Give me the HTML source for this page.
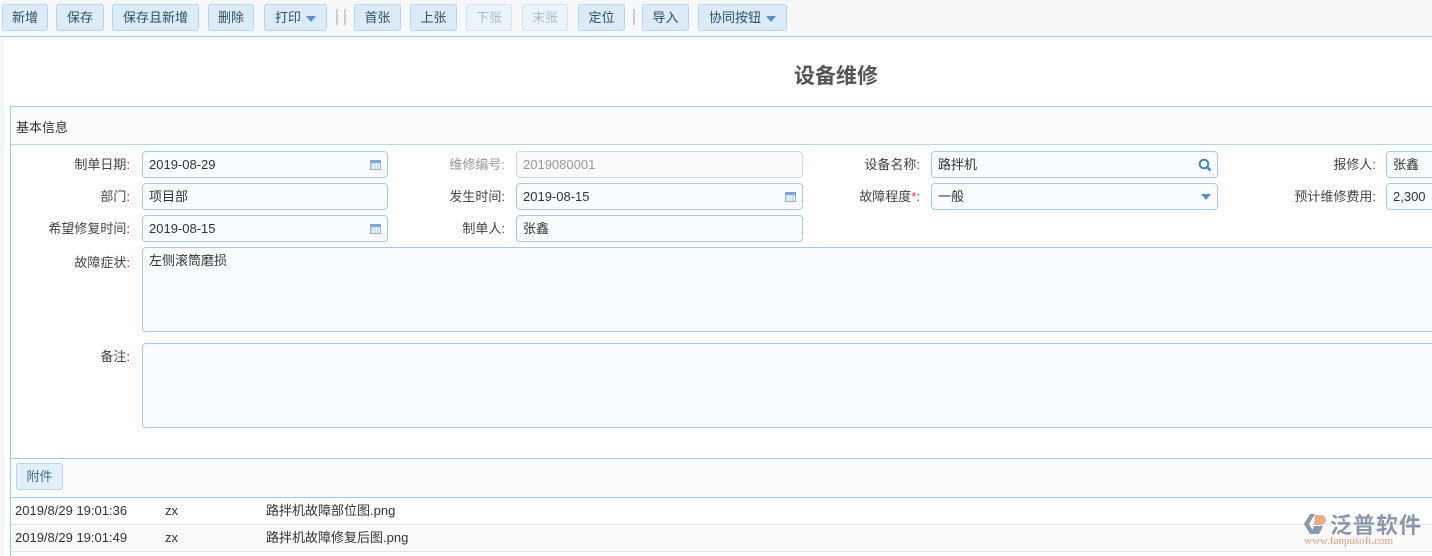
<!DOCTYPE html>
<html><head><meta charset="utf-8"><style>
*{box-sizing:border-box;margin:0;padding:0}
body{width:1432px;height:556px;overflow:hidden;background:#f4f5f6;font-family:"Liberation Sans","Noto Sans CJK SC",sans-serif;font-size:13px;color:#333;position:relative}
.a{position:absolute}
.btn{position:absolute;top:4px;height:27px;border:1px solid #b9d3ea;border-radius:3px;background:#dcebf8;color:#2e4d6b;font-size:13px;line-height:25px;text-align:center}
.dis{color:#a9bdd0;background:#ebf3fb;border-color:#d3e3f1}
.sep{position:absolute;top:9px;width:2px;height:16px;background:#ccc}
.tri{display:inline-block;width:0;height:0;border-left:5px solid transparent;border-right:5px solid transparent;border-top:6px solid #5b8fc4;margin-left:5px;vertical-align:middle}
.lbl{position:absolute;text-align:right;width:160px;color:#444;line-height:27px}
.in{position:absolute;height:27px;border:1px solid #a9c9e6;border-radius:4px;background:#fafdff;padding-left:6px;line-height:25px;color:#333}
.cal{position:absolute;right:6px;top:8px;width:11px;height:10px;border:1px solid #8fb3d9;border-top:3px solid #7aa6d6;background:repeating-linear-gradient(90deg,#cfe0f2 0 2px,#fff 2px 3px)}
</style></head><body>
<div class="a" style="left:0;top:0;width:1432px;height:37px;background:#f7f8f9;border-bottom:1px solid #9ec7ea"></div>
<div class="btn" style="left:2px;width:46px">新增</div>
<div class="btn" style="left:56px;width:48px">保存</div>
<div class="btn" style="left:112px;width:87px">保存且新增</div>
<div class="btn" style="left:208px;width:46px">删除</div>
<div class="btn" style="left:264px;width:63px">打印<span class="tri"></span></div>
<div class="sep" style="left:336px"></div><div class="sep" style="left:344px"></div>
<div class="btn" style="left:354px;width:47px">首张</div>
<div class="btn" style="left:410px;width:47px">上张</div>
<div class="btn dis" style="left:466px;width:46px">下张</div>
<div class="btn dis" style="left:522px;width:46px">末张</div>
<div class="btn" style="left:578px;width:47px">定位</div>
<div class="sep" style="left:633px"></div>
<div class="btn" style="left:642px;width:47px">导入</div>
<div class="btn" style="left:698px;width:89px">协同按钮<span class="tri"></span></div>

<div class="a" style="left:4px;top:40px;width:1428px;height:516px;background:#fff"></div>
<div class="a" style="left:0;top:60px;width:1672px;text-align:center;font-size:21px;font-weight:bold;color:#555">设备维修</div>
<div class="a" style="left:10px;top:106px;width:1422px;height:450px;border-left:1px solid #9ec7ea;border-top:1px solid #9ec7ea;background:#fff"></div>
<div class="a" style="left:11px;top:107px;width:1421px;height:38px;background:#fbfcfd;border-bottom:1px solid #b8d3ea"></div>
<div class="a" style="left:16px;top:117px">基本信息</div>

<div class="lbl" style="left:-30px;top:151px">制单日期:</div>
<div class="in" style="left:142px;top:151px;width:246px">2019-08-29<span class="cal"></span></div>
<div class="lbl" style="left:-30px;top:183px">部门:</div>
<div class="in" style="left:142px;top:183px;width:246px">项目部</div>
<div class="lbl" style="left:-30px;top:215px">希望修复时间:</div>
<div class="in" style="left:142px;top:215px;width:246px">2019-08-15<span class="cal"></span></div>
<div class="lbl" style="left:-30px;top:249px">故障症状:</div>
<div class="in" style="left:142px;top:247px;width:1300px;height:85px">左侧滚筒磨损</div>
<div class="lbl" style="left:-30px;top:343px">备注:</div>
<div class="in" style="left:142px;top:343px;width:1300px;height:85px"></div>

<div class="lbl" style="left:345px;top:151px;color:#999">维修编号:</div>
<div class="in" style="left:516px;top:151px;width:287px;color:#999;background:#fafafa;border-color:#c9dbea">2019080001</div>
<div class="lbl" style="left:345px;top:183px">发生时间:</div>
<div class="in" style="left:516px;top:183px;width:287px">2019-08-15<span class="cal"></span></div>
<div class="lbl" style="left:345px;top:215px">制单人:</div>
<div class="in" style="left:516px;top:215px;width:287px">张鑫</div>

<div class="lbl" style="left:760px;top:151px">设备名称:</div>
<div class="in" style="left:931px;top:151px;width:287px">路拌机<svg class="a" style="right:5px;top:6px" width="14" height="14" viewBox="0 0 14 14"><circle cx="6" cy="6" r="4.3" fill="none" stroke="#3f86c9" stroke-width="2"/><path d="M9 9l3.5 3.5" stroke="#3f86c9" stroke-width="2.4"/></svg></div>
<div class="lbl" style="left:760px;top:183px">故障程度<span style="color:#e33">*</span>:</div>
<div class="in" style="left:931px;top:183px;width:287px">一般<span class="tri a" style="right:6px;top:10px"></span></div>

<div class="lbl" style="left:1216px;top:151px">报修人:</div>
<div class="in" style="left:1386px;top:151px;width:60px">张鑫</div>
<div class="lbl" style="left:1216px;top:183px">预计维修费用:</div>
<div class="in" style="left:1386px;top:183px;width:60px">2,300</div>

<div class="a" style="left:11px;top:458px;width:1421px;height:40px;background:#fbfcfd;border-top:1px solid #9ec7ea;border-bottom:1px solid #9ec7ea"></div>
<div class="btn" style="left:16px;top:463px;width:47px;height:27px;background:#e2f0fc;color:#3a6b9a">附件</div>
<div class="a" style="left:11px;top:498px;width:1421px;height:27px;border-bottom:1px solid #e2e2e2;line-height:26px;background:#fff"><span class="a" style="left:4px">2019/8/29 19:01:36</span><span class="a" style="left:154px">zx</span><span class="a" style="left:255px">路拌机故障部位图.png</span></div>
<div class="a" style="left:11px;top:525px;width:1421px;height:27px;border-bottom:1px solid #e2e2e2;line-height:26px;background:#fafafa"><span class="a" style="left:4px">2019/8/29 19:01:49</span><span class="a" style="left:154px">zx</span><span class="a" style="left:255px">路拌机故障修复后图.png</span></div>

<svg class="a" style="left:1302px;top:512px" width="26" height="24" viewBox="0 0 26 24"><path d="M8 2L2 12l6 10h5L7 12l6-10z" fill="#8a98ad"/><path d="M13 3h6a5 5 0 0 1 0 10h-7z" fill="#e8aa88"/><path d="M12 14h9l-4 8h-8z" fill="#8a98ad"/></svg>
<div class="a" style="left:1330px;top:508px;font-size:22px;color:#8a98ad;font-weight:bold;letter-spacing:1px">泛普软件</div>
<div class="a" style="left:1304px;top:535px;font-size:11px;color:#e0a080;font-family:'Liberation Serif',serif">www.fanpusoft.com</div>
</body></html>
